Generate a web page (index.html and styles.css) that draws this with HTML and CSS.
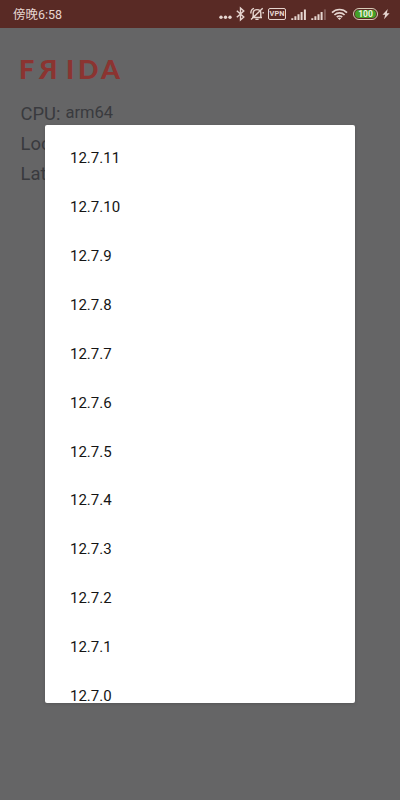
FILE: index.html
```html
<!DOCTYPE html>
<html lang="en">
<head>
<meta charset="utf-8">
<title>Frida</title>
<link rel="stylesheet" href="styles.css">
</head>
<body>
<header class="status">
  <span class="clock">傍晚6:58</span>
  <div class="icons">
    <svg class="dots" width="13" height="18" viewBox="0 0 13 18"><g fill="currentColor"><circle cx="2" cy="12.2" r="1.7"/><circle cx="6.5" cy="12.2" r="1.7"/><circle cx="11" cy="12.2" r="1.7"/></g></svg>
    <svg class="bluetooth" width="9" height="18" viewBox="0 0 9 18"><path d="M.8 5.7 7.8 12 4.5 15V3L7.8 6 .8 12.3" fill="none" stroke="currentColor" stroke-width="1.4"/></svg>
    <svg class="mute" width="14" height="18" viewBox="0 0 14 18"><g fill="none" stroke="currentColor" stroke-width="1.4"><path d="M2 12.5h10M3.2 12.2V8c0-2 1.4-3.4 3.8-3.4S10.8 6 10.8 8v4.2M5.4 14.4h3.2M1 14.6 12.7 3.2M.8 8.5C.8 6 2 4 4 3.4M13.2 8.5V7"/></g></svg>
    <span class="vpn">VPN</span>
    <svg class="signal" width="16" height="18" viewBox="0 0 16 18"><path d="M.3 13.2h2V15h-2zM3.4 11.3h2V15h-2zM6.5 9.2h2V15h-2zM9.6 6.9h2V15h-2zM12.9 4.4h2V15h-2z" fill="currentColor"/></svg>
    <svg class="signal signal-second" width="16" height="18" viewBox="0 0 16 18"><path d="M.3 13.2h2V15h-2zM3.4 11.3h2V15h-2zM6.5 9.2h2V15h-2zM9.6 6.9h2V15h-2z" fill="currentColor"/><path class="faint" d="M12.9 4.4h2V15h-2z" fill="currentColor"/></svg>
    <svg class="wifi" width="17" height="18" viewBox="0 0 17 18"><g fill="none" stroke="currentColor" stroke-width="1.7"><path d="M1 7.6a10.6 10.6 0 0 1 15 0M3.4 10a7.2 7.2 0 0 1 10.2 0M5.8 12.2a3.9 3.9 0 0 1 5.4 0"/></g><path d="M6.8 13.2a2.5 2.5 0 0 1 3.4 0L8.5 15z" fill="currentColor"/></svg>
    <span class="battery"><span class="level">100</span></span>
    <svg class="bolt" width="8" height="18" viewBox="0 0 8 18"><path d="M5.8 4 .5 9.8h2.7L2 14.3l5.6-6H4.8z" fill="currentColor"/></svg>
  </div>
</header>
<main class="page">
  <h1 class="logo"><span class="f">F</span><span class="ya">Я</span><span class="i">I</span><span class="d">D</span><span class="a">A</span></h1>
  <div class="info"><span>CPU:</span><span class="value">arm64</span></div>
  <div class="info">Local:</div>
  <div class="info">Latest:</div>
</main>
<ul class="dialog">
  <li>12.7.11</li>
  <li>12.7.10</li>
  <li>12.7.9</li>
  <li>12.7.8</li>
  <li>12.7.7</li>
  <li>12.7.6</li>
  <li>12.7.5</li>
  <li>12.7.4</li>
  <li>12.7.3</li>
  <li>12.7.2</li>
  <li>12.7.1</li>
  <li>12.7.0</li>
</ul>
</body>
</html>
```
FILE: styles.css
```css
* { box-sizing: border-box; }
body {
  margin: 0;
  position: relative;
  height: 800px;
  overflow: hidden;
  background: #656566;
  font-family: Roboto, "Noto Sans CJK SC", sans-serif;
}
.status {
  display: flex;
  align-items: center;
  justify-content: space-between;
  height: 28px;
  padding: 0 10px 0 13px;
  background: #592a25;
  color: #e6d5d0;
}
.clock { font-size: 12.5px; line-height: 29px; padding-top: 1px; white-space: nowrap; }
.icons { display: flex; align-items: center; height: 28px; }
.icons svg { display: block; flex: none; }
.dots { margin-right: 4px; }
.bluetooth { margin-right: 5px; }
.mute { margin-right: 4px; }
.vpn {
  width: 18px;
  height: 12px;
  margin-right: 5px;
  border: 1px solid currentColor;
  border-radius: 2px;
  font-size: 7.4px;
  font-weight: 700;
  line-height: 10.5px;
  text-align: center;
}
.signal { margin-right: 4px; }
.signal-second { margin-right: 4px; }
.faint { opacity: .3; }
.wifi { margin-right: 5px; }
.battery {
  width: 25px;
  height: 12px;
  padding: 1px;
  margin-right: 4px;
  border: 1px solid #d8cdb9;
  border-radius: 6px;
}
.level {
  display: block;
  height: 8px;
  border-radius: 4px;
  background: #43a027;
  color: #f4f4e4;
  font-size: 8.5px;
  font-weight: 700;
  line-height: 8.5px;
  text-align: center;
}
.page { padding: 27px 20px; color: #393a3e; }
.logo {
  display: flex;
  width: 104px;
  height: 28px;
  margin: 0 0 15px;
  color: #8b3431;
  font: 900 27px/27px Lato, sans-serif;
}
.f { width: 19px; margin-left: -1px; }
.ya { width: 28px; margin-left: 1px; }
.i { width: 12px; margin-left: -1px; }
.d { width: 22px; }
.a { width: 22px; margin-left: 1px; }
.info {
  display: flex;
  align-items: center;
  height: 30px;
  padding-left: .5px;
  font-size: 18.4px;
}
.value { margin: -2px 0 0 5px; font-size: 16.5px; }
.dialog {
  position: absolute;
  left: 45px;
  top: 125px;
  width: 310px;
  height: 578px;
  margin: 0;
  padding: 9.2px 25px 0;
  overflow: hidden;
  list-style: none;
  border-radius: 2px;
  background: #fff;
  color: #151515;
  box-shadow: 0 1px 3px #4446;
}
.dialog li { height: 48.9px; font-size: 15px; line-height: 49px; }
```
